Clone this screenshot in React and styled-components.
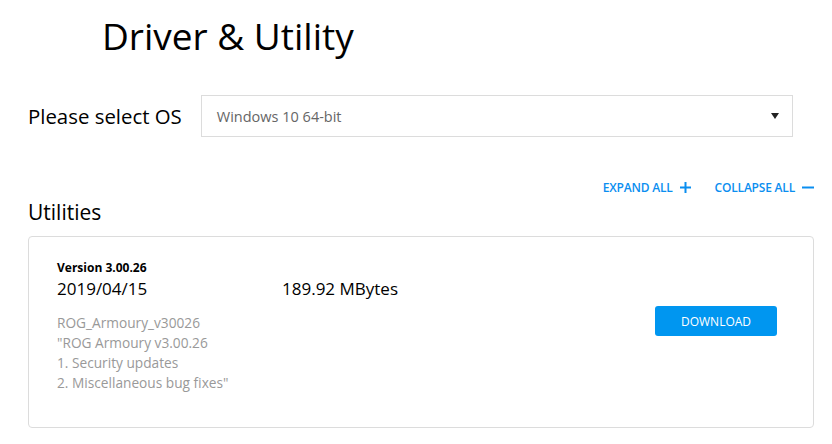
import styled, { createGlobalStyle } from "styled-components";

const GlobalStyle = createGlobalStyle`
  body {
    margin: 0;
    background: #ffffff;
    font-family: "Open Sans", "Noto Sans", sans-serif;
    color: #000000;
  }
`;

const Page = styled.div`
  width: 832px;
  height: 444px;
  padding: 0 18px 0 28px;
  box-sizing: border-box;
  overflow: hidden;
`;

const Title = styled.h1`
  margin: 0;
  padding: 11px 0 0 74px;
  font-size: 37px;
  font-weight: 400;
  line-height: 50px;
`;

const OsRow = styled.div`
  display: flex;
  align-items: center;
  gap: 19px;
  margin-top: 34px;
  padding-right: 21px;
`;

const OsLabel = styled.div`
  font-size: 20.4px;
  white-space: nowrap;
`;

const Select = styled.div`
  flex: 1;
  height: 42px;
  box-sizing: border-box;
  border: 1px solid #dcdcdc;
  display: flex;
  align-items: center;
  justify-content: space-between;
  padding: 0 13px 0 15px;
  font-size: 14.5px;
  color: #666666;
`;

const Caret = styled.span`
  width: 0;
  height: 0;
  border-left: 4px solid transparent;
  border-right: 4px solid transparent;
  border-top: 6px solid #222222;
`;

const Toolbar = styled.div`
  display: flex;
  justify-content: flex-end;
  gap: 24px;
  margin-top: 42px;
`;

const ToolLink = styled.span`
  display: flex;
  align-items: center;
  gap: 7px;
  color: #0a8ef0;
  font-size: 12px;
  font-weight: 600;
  letter-spacing: -0.2px;
`;

const SectionTitle = styled.h2`
  margin: 2px 0 0;
  font-size: 21px;
  font-weight: 400;
  line-height: 28px;
`;

const Card = styled.div`
  margin-top: 10px;
  border: 1px solid #dcdcdc;
  border-radius: 4px;
  height: 192px;
  box-sizing: border-box;
  padding: 22px 36px 0 28px;
  display: flex;
  justify-content: space-between;
`;

const Info = styled.div`
  display: flex;
  flex-direction: column;
`;

const Version = styled.div`
  font-size: 12px;
  font-weight: 700;
  line-height: 18px;
`;

const Meta = styled.div`
  display: flex;
  font-size: 17px;
  line-height: 24px;
`;

const MetaItem = styled.span`
  width: ${(p) => p.$w}px;
`;

const Notes = styled.div`
  margin-top: 12px;
  font-size: 13.7px;
  line-height: 20px;
  color: #999999;
`;

const DownloadButton = styled.button`
  align-self: flex-start;
  margin-top: 47px;
  width: 122px;
  height: 30px;
  border: none;
  border-radius: 3px;
  background: #0096f0;
  color: #ffffff;
  font-family: inherit;
  font-size: 12px;
  cursor: pointer;
`;

const Plus = () => (
  <svg width="11" height="11" viewBox="0 0 11 11">
    <path d="M5.5 0v11M0 5.5h11" stroke="#0a8ef0" strokeWidth="2" />
  </svg>
);

const Minus = () => (
  <svg width="12" height="11" viewBox="0 0 12 11">
    <path d="M0 5.5h12" stroke="#0a8ef0" strokeWidth="2" />
  </svg>
);

export default function App() {
  return (
    <Page>
      <GlobalStyle />
      <Title>Driver &amp; Utility</Title>
      <OsRow>
        <OsLabel>Please select OS</OsLabel>
        <Select>
          Windows 10 64-bit
          <Caret />
        </Select>
      </OsRow>
      <Toolbar>
        <ToolLink>
          EXPAND ALL <Plus />
        </ToolLink>
        <ToolLink>
          COLLAPSE ALL <Minus />
        </ToolLink>
      </Toolbar>
      <SectionTitle>Utilities</SectionTitle>
      <Card>
        <Info>
          <Version>Version 3.00.26</Version>
          <Meta>
            <MetaItem $w={225}>2019/04/15</MetaItem>
            <MetaItem $w={150}>189.92 MBytes</MetaItem>
          </Meta>
          <Notes>
            ROG_Armoury_v30026
            <br />
            "ROG Armoury v3.00.26
            <br />
            1. Security updates
            <br />
            2. Miscellaneous bug fixes"
          </Notes>
        </Info>
        <DownloadButton>DOWNLOAD</DownloadButton>
      </Card>
    </Page>
  );
}
